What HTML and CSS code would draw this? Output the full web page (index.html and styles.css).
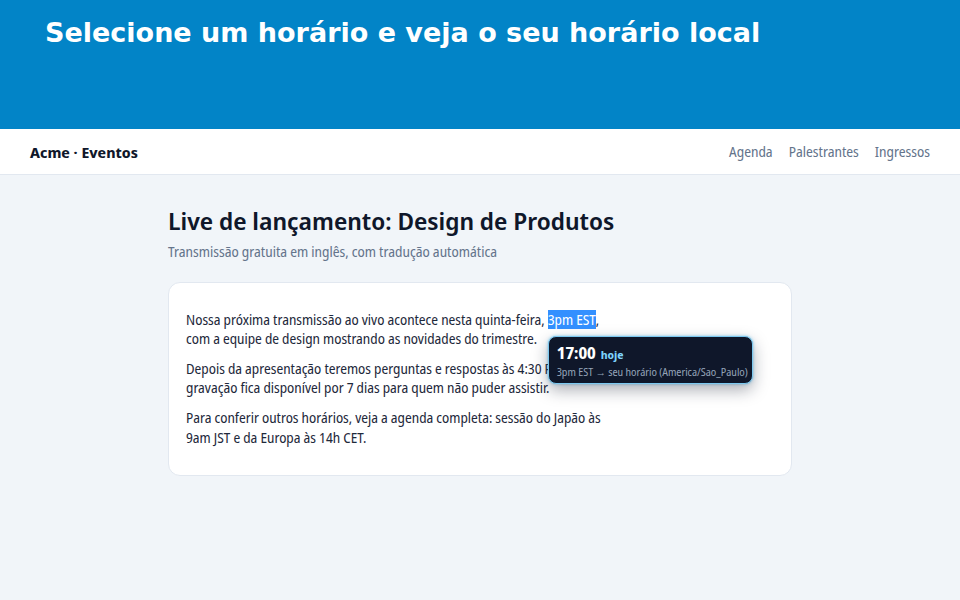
FILE: index.html
```html
<!DOCTYPE html>
<html lang="pt-BR">
<head>
<meta charset="utf-8">
<title>Acme · Eventos</title>
<link rel="stylesheet" href="styles.css">
</head>
<body>
<header class="banner">
  <h1 class="banner-title">Selecione um horário e veja o seu horário local</h1>
</header>
<nav class="topnav">
  <div class="brand">Acme · Eventos</div>
  <div class="links">
    <a href="#">Agenda</a>
    <a href="#">Palestrantes</a>
    <a href="#">Ingressos</a>
  </div>
</nav>
<main class="page">
  <h2 class="title">Live de lançamento: Design de Produtos</h2>
  <p class="subtitle">Transmissão gratuita em inglês, com tradução automática</p>
  <section class="card">
    <p>Nossa próxima transmissão ao vivo acontece nesta quinta-feira, <span class="sel">3pm EST<span class="tip"><span class="tip-time">17:00 <span class="tip-day">hoje</span></span><span class="tip-sub">3pm EST → seu horário (America/Sao_Paulo)</span></span></span>, com a equipe de design mostrando as novidades do trimestre.</p>
    <p>Depois da apresentação teremos perguntas e respostas às 4:30 PM EST. A gravação fica disponível por 7 dias para quem não puder assistir.</p>
    <p>Para conferir outros horários, veja a agenda completa: sessão do Japão às 9am JST e da Europa às 14h CET.</p>
  </section>
</main>
</body>
</html>
```
FILE: styles.css
```css
html, body {
  margin: 0;
  padding: 0;
}
body {
  background: #f1f5f9;
  font-family: "Noto Sans Display", "Noto Sans", "Liberation Sans", sans-serif;
  font-stretch: 87.5%;
  color: #0f172a;
  min-height: 600px;
}
.banner {
  background: #0284c7;
  height: 129px;
  box-sizing: border-box;
  padding: 16px 45px 0;
}
.banner-title {
  margin: 0;
  font-family: "DejaVu Sans", sans-serif;
  font-stretch: 100%;
  font-weight: bold;
  font-size: 27px;
  line-height: 34px;
  color: #ffffff;
}
.topnav {
  background: #ffffff;
  height: 46px;
  box-sizing: border-box;
  border-bottom: 1px solid #e2e8f0;
  display: flex;
  align-items: center;
  justify-content: space-between;
  padding: 0 30px;
}
.brand {
  font-weight: 700;
  font-size: 15px;
  font-stretch: 100%;
  color: #0f172a;
}
.links {
  display: flex;
  gap: 16px;
}
.links a {
  color: #64748b;
  text-decoration: none;
  font-size: 14px;
}
.page {
  width: 624px;
  margin: 0 auto;
  padding-top: 31px;
}
.title {
  margin: 0;
  font-size: 24px;
  line-height: 30px;
  font-weight: 600;
  font-stretch: 100%;
  color: #0f172a;
}
.subtitle {
  margin: 6px 0 0;
  font-size: 14px;
  line-height: 1.4;
  color: #64748b;
}
.card {
  margin-top: 20px;
  background: #ffffff;
  border: 1px solid #e2e8f0;
  border-radius: 12px;
  padding: 27px 17px 28px;
}
.card p {
  margin: 0 0 10px;
  max-width: 420px;
  font-size: 13.9px;
  line-height: 19.6px;
  color: #1e293b;
}
.card p:last-child {
  margin-bottom: 0;
}
.sel {
  position: relative;
  background: #3390ff;
  color: #ffffff;
}
.tip {
  position: absolute;
  left: 0;
  top: 26px;
  width: 205px;
  box-sizing: border-box;
  padding: 6px 8px 4px;
  background: #0f172a;
  border: 1px solid #7cc8f0;
  border-radius: 8px;
  box-shadow: 0 6px 16px rgba(15, 23, 42, 0.35), 0 0 3px rgba(56, 189, 248, 0.6);
  display: flex;
  flex-direction: column;
  white-space: nowrap;
  z-index: 2;
}
.tip-time {
  font-size: 16px;
  line-height: 20px;
  font-weight: 700;
  font-stretch: 100%;
  color: #ffffff;
}
.tip-day {
  font-size: 11px;
  font-weight: 700;
  color: #7dd3fc;
  margin-left: 1px;
}
.tip-sub {
  font-size: 10.5px;
  line-height: 14px;
  color: #94a3b8;
}
```
